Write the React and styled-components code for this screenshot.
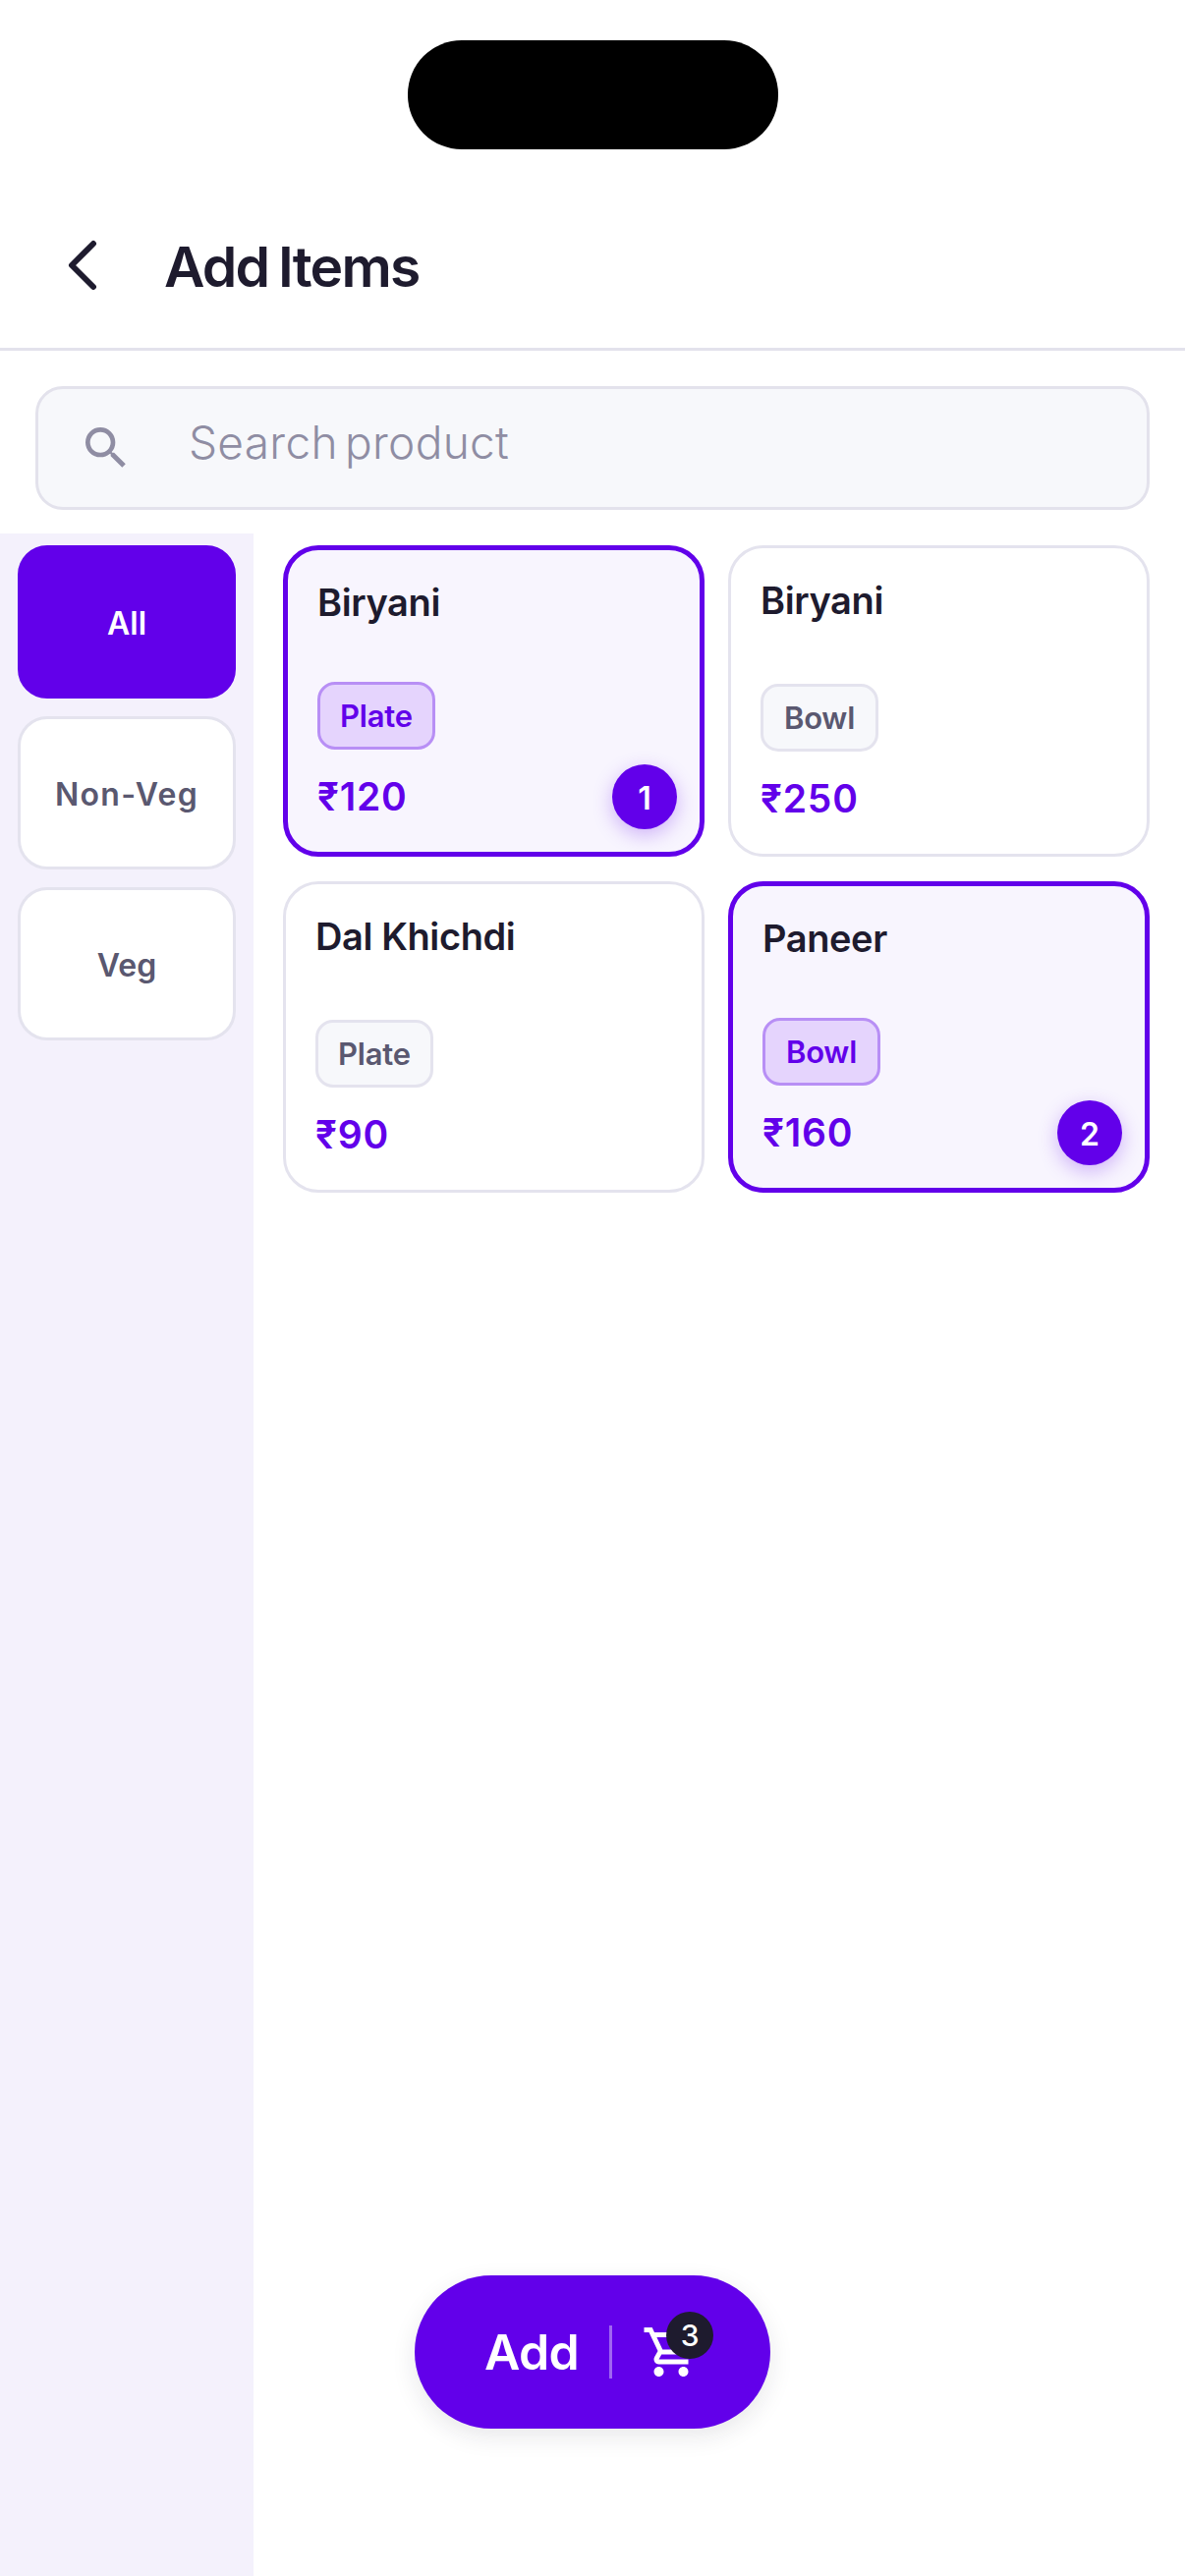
import React from "react";
import styled, { createGlobalStyle } from "styled-components";
import { MdSearch, MdOutlineShoppingCart } from "react-icons/md";

const Global = createGlobalStyle`
  html, body { margin: 0; padding: 0; background: #fff; }
  * { box-sizing: border-box; }
  body { font-family: "Inter", "Noto Sans", sans-serif; }
`;

const Page = styled.div`
  position: relative;
  width: 1206px;
  height: 2622px;
  background: #fff;
  display: flex;
  flex-direction: column;
  overflow: hidden;
`;
const StatusArea = styled.div`
  height: 199px;
  padding-top: 41px;
  display: flex;
  justify-content: center;
  align-items: flex-start;
`;
const Notch = styled.div`
  width: 377px;
  height: 111px;
  border-radius: 55px;
  background: #000;
`;
const Header = styled.header`
  height: 158px;
  display: flex;
  align-items: center;
  border-bottom: 3px solid #e3e2ec;
  padding: 0 0 10px 66px;
`;
const BackIcon = styled.svg`
  width: 36px;
  height: 54px;
  margin-right: 65px;
  margin-top: -4px;
`;
const Title = styled.h1`
  margin: 0;
  font-size: 57px;
  font-weight: 600;
  letter-spacing: -1.8px;
  word-spacing: -3px;
  color: #1e1b2e;
`;
const SearchWrap = styled.div`
  padding: 36px 36px 24px;
`;
const SearchBox = styled.div`
  height: 126px;
  border: 3px solid #e3e2ec;
  border-radius: 28px;
  background: #f7f8fb;
  display: flex;
  align-items: center;
  padding-left: 41px;
  color: #8f8da3;
`;
const SearchText = styled.span`
  margin-left: 56px;
  margin-top: -12px;
  font-size: 46px;
  font-weight: 300;
  letter-spacing: 0.3px;
  word-spacing: -6px;
  color: #8f8da3;
`;
const Body = styled.div`
  flex: 1;
  display: flex;
  min-height: 0;
`;
const Sidebar = styled.aside`
  width: 258px;
  background: #f4f1fc;
  padding: 12px 18px;
  display: flex;
  flex-direction: column;
  gap: 18px;
`;
const Category = styled.div`
  height: 156px;
  border-radius: 30px;
  padding-top: 2px;
  display: flex;
  align-items: center;
  justify-content: center;
  font-size: 32px;
  font-weight: 600;
  letter-spacing: ${(p) => (p.$wide ? "1.3px" : "0")};
  color: ${(p) => (p.$active ? "#fff" : "#5a5870")};
  background: ${(p) => (p.$active ? "#6200ea" : "#fff")};
  border: 3px solid ${(p) => (p.$active ? "#6200ea" : "#e4e3ee")};
`;
const Grid = styled.div`
  flex: 1;
  padding: 12px 36px 0 30px;
  display: grid;
  grid-template-columns: 429px 429px;
  grid-auto-rows: 317px;
  column-gap: 24px;
  row-gap: 25px;
  align-content: start;
`;
const Card = styled.div`
  position: relative;
  border-radius: 36px;
  border: ${(p) => (p.$selected ? "5px solid #6200ea" : "3px solid #e4e3ee")};
  background: ${(p) => (p.$selected ? "#f8f5fe" : "#fff")};
  padding: 29px 0 0 30px;
  display: flex;
  flex-direction: column;
  align-items: flex-start;
`;
const Name = styled.div`
  font-size: 38px;
  line-height: 48px;
  font-weight: 600;
  letter-spacing: -0.4px;
  color: #1e1b2e;
`;
const Tag = styled.div`
  margin-top: ${(p) => (p.$selected ? "57px" : "61px")};
  width: 120px;
  height: 69px;
  border-radius: 18px;
  display: flex;
  align-items: center;
  justify-content: center;
  font-size: 31px;
  font-weight: 600;
  letter-spacing: -0.2px;
  border: 3px solid ${(p) => (p.$selected ? "#b88ff5" : "#e4e3ee")};
  background: ${(p) => (p.$selected ? "#e5d4fd" : "#f7f8fb")};
  color: ${(p) => (p.$selected ? "#6200ea" : "#5a5870")};
`;
const Price = styled.div`
  margin-top: 24px;
  font-size: 39px;
  line-height: 48px;
  font-weight: 600;
  letter-spacing: 0.8px;
  color: #6200ea;
`;
const Count = styled.div`
  position: absolute;
  right: 23px;
  bottom: 23px;
  width: 66px;
  height: 66px;
  border-radius: 50%;
  background: #6200ea;
  color: #fff;
  font-size: 32px;
  font-weight: 600;
  padding-top: 2px;
  display: flex;
  align-items: center;
  justify-content: center;
  box-shadow: 0 6px 20px rgba(98, 0, 234, 0.28);
`;
const AddButton = styled.div`
  position: absolute;
  left: 422px;
  top: 2316px;
  width: 362px;
  height: 156px;
  border-radius: 78px;
  background: #6200ea;
  box-shadow: 0 8px 24px rgba(30, 27, 46, 0.1);
  display: flex;
  align-items: center;
  padding-left: 71px;
  color: #fff;
`;
const AddLabel = styled.span`
  font-size: 50px;
  font-weight: 600;
  letter-spacing: -0.6px;
`;
const Divider = styled.span`
  width: 3px;
  height: 54px;
  margin-left: 31px;
  background: rgba(255, 255, 255, 0.4);
`;
const CartWrap = styled.span`
  position: relative;
  margin-left: 30px;
  width: 60px;
  height: 60px;
  display: flex;
`;
const CartBadge = styled.span`
  position: absolute;
  left: 25px;
  top: -11px;
  width: 48px;
  height: 48px;
  border-radius: 50%;
  background: #1e1b2e;
  color: #fff;
  font-size: 30px;
  font-weight: 500;
  display: flex;
  align-items: center;
  justify-content: center;
`;

const categories = [
  { label: "All", active: true },
  { label: "Non-Veg", wide: true },
  { label: "Veg" },
];
const items = [
  { name: "Biryani", unit: "Plate", price: "₹120", count: 1 },
  { name: "Biryani", unit: "Bowl", price: "₹250" },
  { name: "Dal Khichdi", unit: "Plate", price: "₹90" },
  { name: "Paneer", unit: "Bowl", price: "₹160", count: 2 },
];

export default function App() {
  return (
    <Page>
      <Global />
      <StatusArea>
        <Notch />
      </StatusArea>
      <Header>
        <BackIcon viewBox="0 0 36 54" fill="none">
          <path d="M29 5 L7 27 L29 49" stroke="#1e1b2e" strokeWidth="6" strokeLinecap="round" strokeLinejoin="round" />
        </BackIcon>
        <Title>Add Items</Title>
      </Header>
      <SearchWrap>
        <SearchBox>
          <MdSearch size={56} />
          <SearchText>Search product</SearchText>
        </SearchBox>
      </SearchWrap>
      <Body>
        <Sidebar>
          {categories.map((c) => (
            <Category key={c.label} $active={c.active} $wide={c.wide}>{c.label}</Category>
          ))}
        </Sidebar>
        <Grid>
          {items.map((it, i) => (
            <Card key={i} $selected={!!it.count}>
              <Name>{it.name}</Name>
              <Tag $selected={!!it.count}>{it.unit}</Tag>
              <Price>{it.price}</Price>
              {it.count ? <Count>{it.count}</Count> : null}
            </Card>
          ))}
        </Grid>
      </Body>
      <AddButton>
        <AddLabel>Add</AddLabel>
        <Divider />
        <CartWrap>
          <MdOutlineShoppingCart size={60} />
          <CartBadge>3</CartBadge>
        </CartWrap>
      </AddButton>
    </Page>
  );
}
